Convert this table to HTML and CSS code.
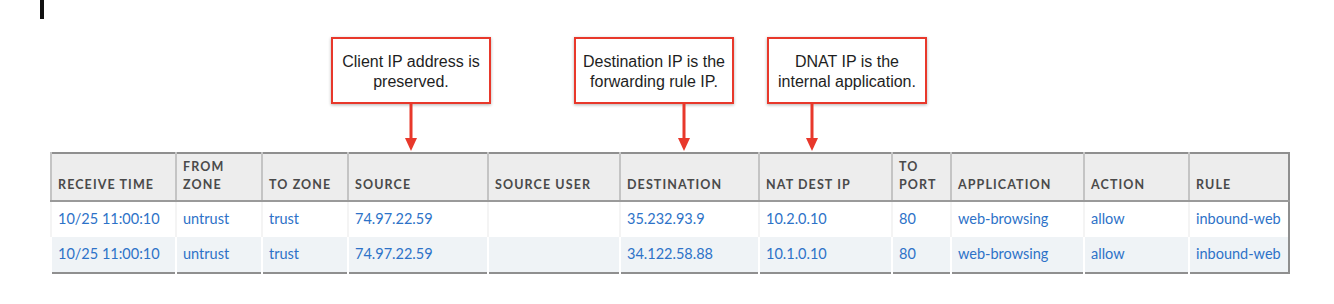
FILE: index.html
```html
<!DOCTYPE html>
<html lang="en">
<head>
<meta charset="utf-8">
<title>NAT traffic log</title>
<link rel="stylesheet" href="styles.css">
</head>
<body>
<div class="page">
  <div class="topbar"></div>
  <div class="callouts">
    <div class="callout c1">
      <div class="note">Client IP address is<br>preserved.</div>
      <svg class="arrow a1" width="14" height="48" viewBox="0 0 14 48"><rect x="5.5" y="0" width="3" height="36" fill="#e8382b"/><polygon points="1,34 13,34 7,47" fill="#e8382b"/></svg>
    </div>
    <div class="callout c2">
      <div class="note">Destination IP is the<br>forwarding rule IP.</div>
      <svg class="arrow a2" width="14" height="48" viewBox="0 0 14 48"><rect x="5.5" y="0" width="3" height="36" fill="#e8382b"/><polygon points="1,34 13,34 7,47" fill="#e8382b"/></svg>
    </div>
    <div class="callout c3">
      <div class="note">DNAT IP is the<br>internal application.</div>
      <svg class="arrow a3" width="14" height="48" viewBox="0 0 14 48"><rect x="5.5" y="0" width="3" height="36" fill="#e8382b"/><polygon points="1,34 13,34 7,47" fill="#e8382b"/></svg>
    </div>
  </div>
  <table class="log">
    <colgroup>
      <col class="w-time"><col class="w-from"><col class="w-to"><col class="w-src"><col class="w-user"><col class="w-dst"><col class="w-nat"><col class="w-port"><col class="w-app"><col class="w-act"><col class="w-rule">
    </colgroup>
    <thead>
      <tr>
        <th>Receive Time</th>
        <th>From<br>Zone</th>
        <th>To Zone</th>
        <th>Source</th>
        <th>Source User</th>
        <th>Destination</th>
        <th>NAT Dest IP</th>
        <th>To<br>Port</th>
        <th>Application</th>
        <th>Action</th>
        <th>Rule</th>
      </tr>
    </thead>
    <tbody>
      <tr>
        <td>10/25 11:00:10</td>
        <td>untrust</td>
        <td>trust</td>
        <td>74.97.22.59</td>
        <td></td>
        <td>35.232.93.9</td>
        <td>10.2.0.10</td>
        <td>80</td>
        <td>web-browsing</td>
        <td>allow</td>
        <td>inbound-web</td>
      </tr>
      <tr class="alt">
        <td>10/25 11:00:10</td>
        <td>untrust</td>
        <td>trust</td>
        <td>74.97.22.59</td>
        <td></td>
        <td>34.122.58.88</td>
        <td>10.1.0.10</td>
        <td>80</td>
        <td>web-browsing</td>
        <td>allow</td>
        <td>inbound-web</td>
      </tr>
    </tbody>
  </table>
</div>
</body>
</html>
```
FILE: styles.css
```css
html, body {
  margin: 0;
  padding: 0;
  background: #ffffff;
}

.page {
  width: 1334px;
  height: 304px;
  display: flex;
  flex-direction: column;
}

.topbar {
  width: 4px;
  height: 19px;
  margin-left: 40px;
  background: #111111;
}

.callouts {
  display: flex;
  align-items: flex-start;
  margin-top: 18px;
  padding-left: 331px;
  height: 115px;
}

.callout {
  display: flex;
  flex-direction: column;
  width: 160px;
}

.c2 { margin-left: 83px; }
.c3 { margin-left: 33px; }

.note {
  box-sizing: border-box;
  width: 160px;
  height: 67px;
  border: 2px solid #e8382b;
  background: #ffffff;
  box-shadow: 0 1px 3px rgba(0, 0, 0, 0.3);
  display: flex;
  align-items: center;
  justify-content: center;
  padding-top: 3px;
  text-align: center;
  font-family: "Liberation Sans", Arial, sans-serif;
  font-size: 16px;
  line-height: 20px;
  color: #1e1e1e;
}

.arrow { display: block; }
.a1 { margin-left: 73px; }
.a2 { margin-left: 103px; }
.a3 { margin-left: 38px; }

.log {
  margin-left: 50px;
  width: 1238px;
  table-layout: fixed;
  border-collapse: collapse;
  border: 2px solid #8f8f8f;
  font-family: Lato, "Open Sans", sans-serif;
}

.w-time { width: 125px; }
.w-from { width: 86px; }
.w-to { width: 86px; }
.w-src { width: 140px; }
.w-user { width: 132px; }
.w-dst { width: 139px; }
.w-nat { width: 133px; }
.w-port { width: 59px; }
.w-app { width: 133px; }
.w-act { width: 105px; }
.w-rule { width: 100px; }

.log th {
  height: 48px;
  box-sizing: border-box;
  background: #ededed;
  border-left: 2px solid #c4c4c4;
  border-bottom: 2px solid #9a9a9a;
  padding: 0 0 6px 6px;
  vertical-align: bottom;
  text-align: left;
  text-transform: uppercase;
  font-weight: 700;
  font-size: 12.5px;
  letter-spacing: 1.1px;
  line-height: 18px;
  color: #4a4a4a;
}

.log td {
  height: 36px;
  box-sizing: border-box;
  border-left: 2px solid #f4f4f4;
  padding: 0 0 3px 6px;
  vertical-align: middle;
  font-size: 14.5px;
  color: #2d72c8;
  white-space: nowrap;
  overflow: hidden;
}

.log tr.alt td {
  background: #eff3f6;
  border-left-color: #ffffff;
}
```
